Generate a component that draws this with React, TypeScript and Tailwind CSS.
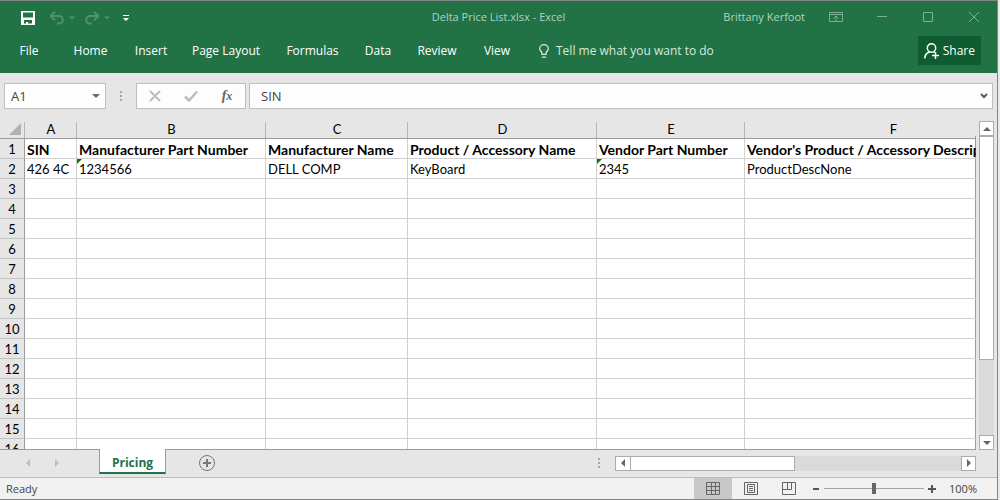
import { useState } from "react";
import type { ReactNode } from "react";

const ribbonTabs = [
  { name: "File", width: "w-[58px]" },
  { name: "Home", width: "w-[65px]" },
  { name: "Insert", width: "w-[56px]" },
  { name: "Page Layout", width: "w-[94px]" },
  { name: "Formulas", width: "w-[79px]" },
  { name: "Data", width: "w-[52px]" },
  { name: "Review", width: "w-[66px]" },
  { name: "View", width: "w-[54px]" },
];

const columns = [
  { letter: "A", width: "w-[52px]" },
  { letter: "B", width: "w-[189px]" },
  { letter: "C", width: "w-[142px]" },
  { letter: "D", width: "w-[189px]" },
  { letter: "E", width: "w-[148px]" },
  { letter: "F", width: "" },
];

const sheet: string[][] = [
  [
    "SIN",
    "Manufacturer Part Number",
    "Manufacturer Name",
    "Product / Accessory Name",
    "Vendor Part Number",
    "Vendor's Product / Accessory Description",
  ],
  ["426 4C", "1234566", "DELL COMP", "KeyBoard", "2345", "ProductDescNone"],
];

const numbersAsText = new Set(["1234566", "2345"]);
const rowCount = 16;

function Triangle({ dir, className = "size-2" }: { dir: "up" | "down" | "left" | "right"; className?: string }) {
  const points = {
    up: "0,6 4,2 8,6",
    down: "0,2 8,2 4,6",
    left: "6,0 6,8 2,4",
    right: "2,0 6,4 2,8",
  }[dir];
  return (
    <svg viewBox="0 0 8 8" className={`shrink-0 fill-current ${className}`} aria-hidden="true">
      <polygon points={points} />
    </svg>
  );
}

function Dots() {
  return (
    <svg viewBox="0 0 2 10" className="h-[10px] w-[2px] shrink-0 fill-[#a6a6a6]" aria-hidden="true">
      <rect width="2" height="2" />
      <rect y="4" width="2" height="2" />
      <rect y="8" width="2" height="2" />
    </svg>
  );
}

function WindowButton({ label, children }: { label: string; children: ReactNode }) {
  return (
    <button type="button" aria-label={label} className="flex h-full w-[46px] items-center justify-center">
      <svg viewBox="0 0 14 12" className="h-3 w-[14px] fill-none stroke-[#7fb093]" aria-hidden="true">
        {children}
      </svg>
    </button>
  );
}

function TitleBar() {
  return (
    <div className="grid h-8 grid-cols-[1fr_auto_1fr] items-center">
      <div className="flex items-center pt-[2px] pl-[21px]">
        <button type="button" aria-label="Save">
          <svg viewBox="0 0 14 14" className="size-[14px]" aria-hidden="true">
            <path fill="#fff" fillRule="evenodd" d="M0 0h14v14H0zM2 1.5v5h10v-5zM3 9v3.5h2V11h2v1.500h4V9z" />
          </svg>
        </button>
        <button type="button" aria-label="Undo" className="ml-[14px] text-[#4f926d]">
          <svg viewBox="0 0 16 14" className="h-[14px] w-4 fill-none stroke-current stroke-2" aria-hidden="true">
            <path d="M6 .8 1.800 5 6 9.200M2 5h8a3.800 3.800 0 0 1 0 7.600H8" />
          </svg>
        </button>
        <button type="button" aria-label="Undo history" className="ml-1 text-[#4f926d]">
          <Triangle dir="down" className="size-[6px]" />
        </button>
        <button type="button" aria-label="Redo" className="ml-[9px] text-[#4f926d]">
          <svg viewBox="0 0 16 14" className="h-[14px] w-4 fill-none stroke-current stroke-2" aria-hidden="true">
            <path d="M10 .8 14.200 5 10 9.200M14 5H6a3.800 3.800 0 0 0 0 7.600h2" />
          </svg>
        </button>
        <button type="button" aria-label="Redo history" className="ml-1 text-[#4f926d]">
          <Triangle dir="down" className="size-[6px]" />
        </button>
        <button type="button" aria-label="Customize Quick Access Toolbar" className="ml-[13px]">
          <svg viewBox="0 0 6 7" className="h-[7px] w-[6px] fill-white" aria-hidden="true">
            <path d="M0 0h6v1H0zM0 3h6L3 6z" />
          </svg>
        </button>
      </div>
      <h1 className="text-[11px] text-[#b3d1bf]">Delta Price List.xlsx - Excel</h1>
      <div className="flex h-full items-center justify-end">
        <span className="mr-2 text-[11px] text-[#b3d1bf]">Brittany Kerfoot</span>
        <WindowButton label="Ribbon display options">
          <path d="M.5 1.5h13v9H.5zM.5 3.5h13M7 10V5.5M4.5 7.5 7 5l2.5 2.5" />
        </WindowButton>
        <WindowButton label="Minimize">
          <path d="M2 5.500h10" />
        </WindowButton>
        <WindowButton label="Maximize">
          <path d="M2.500 1.500h9v9h-9z" />
        </WindowButton>
        <WindowButton label="Close">
          <path d="m2 1 10 10M12 1 2 11" />
        </WindowButton>
      </div>
    </div>
  );
}

function Ribbon() {
  return (
    <div className="flex h-10 items-start">
      <nav className="flex" aria-label="Ribbon tabs">
        {ribbonTabs.map((tab) => (
          <button key={tab.name} type="button" className={`${tab.width} h-9 whitespace-nowrap text-center text-white`}>
            {tab.name}
          </button>
        ))}
      </nav>
      <button type="button" className="ml-[15px] flex h-9 items-center gap-[7px] text-[#d6e8dd]">
        <svg viewBox="0 0 10 14" className="h-[14px] w-[10px] fill-none stroke-current" aria-hidden="true">
          <path
            strokeWidth="1.3"
            d="M3 10.400V9.300C3 7.600.7 6.800.7 4.700a4.300 4.000 0 0 1 8.600 0C9.300 6.800 7 7.600 7 9.300v1.100zM3 13.200h4"
          />
        </svg>
        Tell me what you want to do
      </button>
      <button
        type="button"
        className="mt-[3px] mr-4 ml-auto flex h-[29px] items-center gap-1 bg-[#0e5c2f] px-[6px] text-white"
      >
        <svg viewBox="0 0 15 16" className="h-4 w-[15px] fill-none stroke-current" aria-hidden="true">
          <circle cx="7.500" cy="5" r="4.200" strokeWidth="1.500" />
          <path strokeWidth="1.500" d="M.8 15.500C.8 12 3 9.500 5.800 8.900M9.300 8.700l1.500.6M11.500 9v7M8 12.500h7" />
        </svg>
        Share
      </button>
    </div>
  );
}

function FormulaBar() {
  const [cell, setCell] = useState("A1");
  const [formula, setFormula] = useState("SIN");
  return (
    <div className="flex h-[46px] items-center px-1">
      <div className="flex h-[26px] w-[102px] items-center border border-[#bfbfbf] bg-[#fdfdfd]">
        <input
          aria-label="Name box"
          value={cell}
          onChange={(e) => setCell(e.target.value)}
          className="w-full min-w-0 bg-transparent pl-[6px] text-[13px] text-[#444] outline-none"
        />
        <button type="button" aria-label="Show names" className="px-[5px] text-[#6a6a6a]">
          <Triangle dir="down" />
        </button>
      </div>
      <div className="flex w-[30px] justify-center">
        <Dots />
      </div>
      <div className="flex h-[26px] w-[110px] items-center border border-[#bfbfbf] bg-[#fdfdfd]">
        <button type="button" aria-label="Cancel" className="flex flex-1 justify-center">
          <svg viewBox="0 0 12 12" className="size-3 fill-none stroke-[#bdbdbd] stroke-2" aria-hidden="true">
            <path d="m1 1 10 10M11 1 1 11" />
          </svg>
        </button>
        <button type="button" aria-label="Enter" className="flex flex-1 justify-center">
          <svg viewBox="0 0 14 12" className="h-3 w-[14px] fill-none stroke-[#bdbdbd] stroke-[2.5]" aria-hidden="true">
            <path d="m1 6.500 4 4L13 1.500" />
          </svg>
        </button>
        <button
          type="button"
          aria-label="Insert function"
          className="flex flex-1 items-baseline justify-center font-['Liberation_Serif',serif] font-bold text-[#666] italic"
        >
          <span className="text-[14px] leading-5">f</span>
          <span className="text-[12px] leading-5">x</span>
        </button>
      </div>
      <div className="ml-[3px] flex h-[26px] flex-1 items-center border border-[#bfbfbf] bg-[#fdfdfd]">
        <input
          aria-label="Formula bar"
          value={formula}
          onChange={(e) => setFormula(e.target.value)}
          className="w-full min-w-0 bg-transparent pl-[11px] text-[13px] text-[#444] outline-none"
        />
        <button type="button" aria-label="Expand formula bar" className="px-1">
          <svg viewBox="0 0 8 6" className="h-[6px] w-2 fill-none stroke-[#595959] stroke-2" aria-hidden="true">
            <path d="m1 1 3 3 3-3" />
          </svg>
        </button>
      </div>
    </div>
  );
}

function Sheet() {
  return (
    <div className="min-h-0 flex-1 overflow-hidden bg-[#e6e6e6]">
      <table className="w-[1042px] min-w-full table-fixed border-separate border-spacing-0 font-[Lato,sans-serif] text-[13px] leading-[17px] text-black">
        <colgroup>
          <col className="w-[25px]" />
          {columns.map((c) => (
            <col key={c.letter} className={c.width} />
          ))}
        </colgroup>
        <thead>
          <tr className="h-5 bg-[#e6e6e6]">
            <td className="border-b border-[#9b9b9b] bg-[linear-gradient(#b5b5b5,#b5b5b5)] bg-[length:1px_16px] bg-[position:right_bottom] bg-no-repeat p-0">
              <button type="button" aria-label="Select all" className="block w-full">
                <svg viewBox="0 0 12 12" className="mr-1 ml-auto size-3 fill-[#b1b1b1]" aria-hidden="true">
                  <polygon points="12,0 12,12 0,12" />
                </svg>
              </button>
            </td>
            {columns.map((c) => (
              <th
                key={c.letter}
                scope="col"
                className="border-b border-[#9b9b9b] bg-[linear-gradient(#b5b5b5,#b5b5b5)] bg-[length:1px_16px] bg-[position:right_bottom] bg-no-repeat px-0 pt-[2px] pb-0 text-center font-normal"
              >
                {c.letter}
              </th>
            ))}
          </tr>
        </thead>
        <tbody>
          {Array.from({ length: rowCount }, (_, r) => (
            <tr key={r} className="h-5 bg-white">
              <th
                scope="row"
                className="border-r border-b border-r-[#9b9b9b] border-b-[#c3c3c3] bg-[#e6e6e6] px-0 pt-[2px] pb-0 text-center font-normal"
              >
                {r + 1}
              </th>
              {columns.map((c, i) => {
                const value = sheet[r]?.[i] ?? "";
                return (
                  <td
                    key={c.letter}
                    className={`relative border-r border-b border-[#d0d0d0] pt-[2px] pr-0 pb-0 pl-[2px] whitespace-nowrap ${r === 0 ? "text-[14px] font-bold" : ""}`}
                  >
                    {value}
                    {numbersAsText.has(value) && (
                      <svg viewBox="0 0 5 5" className="absolute top-0 left-0 size-[5px] fill-[#008000]" aria-hidden="true">
                        <polygon points="0,0 5,0 0,5" />
                      </svg>
                    )}
                  </td>
                );
              })}
            </tr>
          ))}
        </tbody>
      </table>
    </div>
  );
}

function SheetTabs() {
  return (
    <div className="flex h-7 shrink-0 items-start border-t border-[#9b9b9b]">
      <div className="flex h-[26px] w-[99px] items-center gap-[21px] pl-6 text-[#bdbdbd]">
        <button type="button" aria-label="Previous sheet">
          <Triangle dir="left" />
        </button>
        <button type="button" aria-label="Next sheet">
          <Triangle dir="right" />
        </button>
      </div>
      <button
        type="button"
        className="-mt-px h-[25px] w-[67px] border-x border-b-2 border-x-[#9b9b9b] border-b-[#217346] bg-white pt-1 text-center font-bold text-[#217346]"
      >
        Pricing
      </button>
      <button type="button" aria-label="New sheet" className="ml-8 flex h-[26px] items-center">
        <svg viewBox="0 0 18 18" className="size-[18px] fill-none stroke-[#777]" aria-hidden="true">
          <circle cx="9" cy="9" r="7.500" />
          <path strokeWidth="2" d="M9 5v8M5 9h8" />
        </svg>
      </button>
      <div className="ml-auto flex h-[26px] w-[378px] items-center">
        <Dots />
        <div className="ml-[15px] flex h-[15px] flex-1 bg-[#dadada] text-[#666]">
          <button
            type="button"
            aria-label="Scroll left"
            className="flex w-4 items-center justify-center border border-[#ababab] bg-white"
          >
            <Triangle dir="left" />
          </button>
          <div className="-ml-px w-[165px] border border-[#ababab] bg-white" />
          <button
            type="button"
            aria-label="Scroll right"
            className="ml-auto flex w-[15px] items-center justify-center border border-[#ababab] bg-white"
          >
            <Triangle dir="right" />
          </button>
        </div>
      </div>
    </div>
  );
}

function VerticalScrollbar() {
  return (
    <div className="mb-[27px] flex flex-col pt-[2px]">
      <div className="-mt-[2px] h-5 w-[21px] px-[3px] pt-[2px] text-[#666]">
        <button
          type="button"
          aria-label="Scroll up"
          className="flex h-[15px] w-full items-center justify-center border border-[#ababab] bg-white"
        >
          <Triangle dir="up" />
        </button>
      </div>
      <div className="-mt-[3px] -ml-px flex flex-1 border-l border-[#9b9b9b] px-[3px] text-[#666]">
        <div className="flex w-[15px] flex-col bg-[#dadada]">
          <div className="h-56 border border-[#ababab] bg-white" />
          <button
            type="button"
            aria-label="Scroll down"
            className="mt-auto flex h-[15px] items-center justify-center border border-[#ababab] bg-white"
          >
            <Triangle dir="down" />
          </button>
        </div>
      </div>
    </div>
  );
}

function ViewButton({ label, active = false, children }: { label: string; active?: boolean; children: ReactNode }) {
  return (
    <button
      type="button"
      aria-label={label}
      aria-pressed={active}
      className={`flex h-full w-[38px] items-center justify-center ${active ? "bg-[#c8c8c8]" : ""}`}
    >
      <svg viewBox="0 0 14 13" className="h-[13px] w-[14px] fill-none stroke-[#666]" aria-hidden="true">
        {children}
      </svg>
    </button>
  );
}

function StatusBar() {
  const [zoom, setZoom] = useState(100);
  return (
    <div className="flex h-[22px] shrink-0 items-center border-t border-[#bdbdbd] bg-[#f1f1f1] text-[11px] text-[#444]">
      <span className="pl-[6px]">Ready</span>
      <div className="ml-auto flex h-full">
        <ViewButton label="Normal view" active>
          <path d="M.5.5h13v12H.5zM5.500.5v12M9.500.5v12M.5 4.500h13M.5 8.500h13" />
        </ViewButton>
        <ViewButton label="Page layout view">
          <path d="M.5.5h13v12H.5zM3.500 2.500h7v8h-7zM5 4.500h4M5 6.500h4M5 8.500h4" />
        </ViewButton>
        <ViewButton label="Page break preview">
          <path d="M.5.5h13v12H.5zM.5 7.500h9v-7M5.500.5v7" />
        </ViewButton>
      </div>
      <button type="button" aria-label="Zoom out" className="ml-1" onClick={() => setZoom((z) => Math.max(10, z - 10))}>
        <svg viewBox="0 0 8 8" className="size-2 stroke-[#555] stroke-2" aria-hidden="true">
          <path d="M1 4h6" />
        </svg>
      </button>
      <input
        type="range"
        aria-label="Zoom"
        min={10}
        max={190}
        value={zoom}
        onChange={(e) => setZoom(Number(e.target.value))}
        className="mx-1 h-3 w-[100px] appearance-none bg-[linear-gradient(#a6a6a6,#a6a6a6)] bg-[length:100%_1px] bg-center bg-no-repeat [&::-webkit-slider-thumb]:h-[11px] [&::-webkit-slider-thumb]:w-1 [&::-webkit-slider-thumb]:appearance-none [&::-webkit-slider-thumb]:bg-[#666]"
      />
      <button type="button" aria-label="Zoom in" onClick={() => setZoom((z) => Math.min(190, z + 10))}>
        <svg viewBox="0 0 8 8" className="size-2 stroke-[#555] stroke-2" aria-hidden="true">
          <path d="M0 4h8M4 0v8" />
        </svg>
      </button>
      <span className="w-[61px] pr-5 text-right">{zoom}%</span>
    </div>
  );
}

export default function App() {
  return (
    <div className="h-screen bg-[#e9e9e9] pr-[2px]">
      <div className="flex h-full flex-col border-t border-r border-b border-[#858585] bg-[#e6e6e6] font-['Open_Sans',sans-serif] text-[12px] leading-4">
        <header className="bg-[#217346]">
          <TitleBar />
          <Ribbon />
        </header>
        <FormulaBar />
        <main className="flex min-h-0 flex-1">
          <div className="flex min-w-0 flex-1 flex-col">
            <Sheet />
            <SheetTabs />
          </div>
          <VerticalScrollbar />
        </main>
        <StatusBar />
      </div>
    </div>
  );
}
